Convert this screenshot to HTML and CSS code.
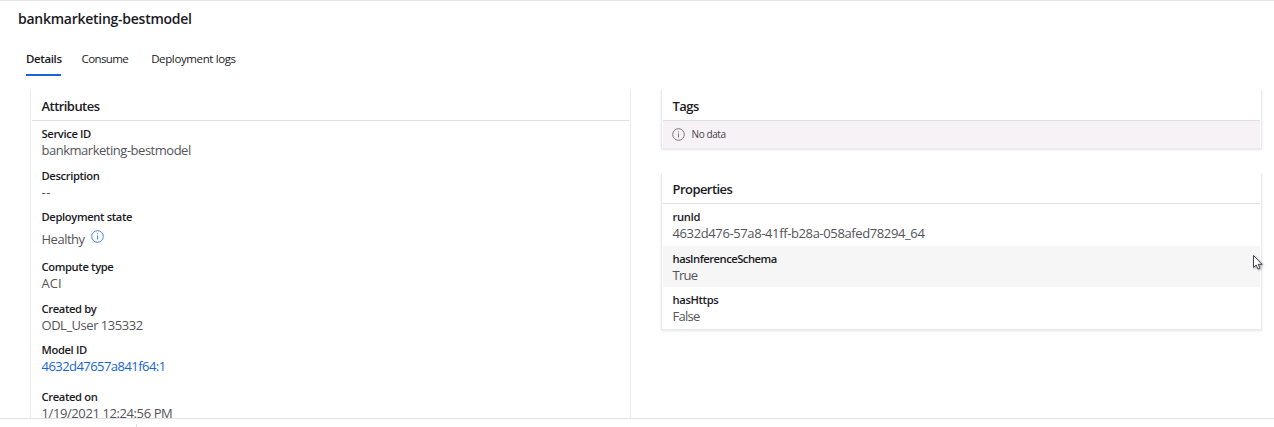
FILE: index.html
```html
<!DOCTYPE html>
<html lang="en">
<head>
<meta charset="utf-8">
<title>bankmarketing-bestmodel</title>
<link rel="stylesheet" href="styles.css">
</head>
<body>
<div class="page">
  <h1 class="title">bankmarketing-bestmodel</h1>
  <nav class="tabs">
    <a class="tab active">Details</a>
    <a class="tab consume">Consume</a>
    <a class="tab">Deployment logs</a>
  </nav>
  <main class="content">
    <section class="card attributes">
      <h2 class="heading">Attributes</h2>
      <dl class="list">
        <div class="row"><dt>Service ID</dt><dd>bankmarketing-bestmodel</dd></div>
        <div class="row"><dt>Description</dt><dd class="dashes">--</dd></div>
        <div class="row state"><dt>Deployment state</dt><dd>Healthy<svg class="info" viewBox="0 0 13 13"><circle cx="6.5" cy="6.5" r="5.8"/><path d="M6.5 5.5v4M6.5 3.3v1"/></svg></dd></div>
        <div class="row"><dt>Compute type</dt><dd class="aci">ACI</dd></div>
        <div class="row"><dt>Created by</dt><dd>ODL_User 135332</dd></div>
        <div class="row model"><dt>Model ID</dt><dd><a class="link">4632d47657a841f64:1</a></dd></div>
        <div class="row"><dt>Created on</dt><dd class="date">1/19/2021 12:24:56 PM</dd></div>
      </dl>
    </section>
    <div class="side">
      <section class="card raised">
        <h2 class="heading">Tags</h2>
        <div class="empty"><svg class="info" viewBox="0 0 13 13"><circle cx="6.5" cy="6.5" r="5.8"/><path d="M6.5 5.5v4M6.5 3.3v1"/></svg>No data</div>
      </section>
      <section class="card raised properties">
        <h2 class="heading">Properties</h2>
        <dl class="list">
          <div class="row"><dt>runId</dt><dd class="run">4632d476-57a8-41ff-b28a-058afed78294_64</dd></div>
          <div class="row hovered"><dt class="schema">hasInferenceSchema</dt><dd class="flag">True</dd></div>
          <div class="row"><dt>hasHttps</dt><dd class="flag">False</dd></div>
        </dl>
      </section>
    </div>
  </main>
  <footer class="footer"><i class="tick"></i></footer>
  <svg class="cursor" viewBox="0 0 12 17"><path d="M1.5 1.5v12l2.7-2.4 1.8 4 2-.9-1.8-3.9h3.9z"/></svg>
</div>
</body>
</html>
```

FILE: styles.css
```css
* { box-sizing: border-box; }
body { margin: 0; background: #fff; color: #1b1a1f; font-family: "Open Sans", "Noto Sans", sans-serif; }
h1, h2, dl, dd { margin: 0; }
.page { position: relative; display: flex; flex-direction: column; width: 1274px; height: 427px; overflow: hidden; border-top: 1px solid #e3e3e3; }
.title { height: 43px; padding: 8px 18px 0; font-size: 14px; line-height: 20px; font-weight: 600; letter-spacing: -.26px; }
.tabs { display: flex; height: 46px; padding-left: 26px; font-size: 11.5px; line-height: 29px; letter-spacing: -.38px; }
.tab { height: 32px; margin-right: 23px; }
.tab.active { width: 35px; margin-right: 20.5px; font-weight: 600; border-bottom: 2px solid #1664d9; }
.tab.consume { letter-spacing: -.6px; }
.content { display: flex; gap: 30px; height: 328px; padding-left: 30px; overflow: hidden; }
.card { width: 601px; padding: 0 1px; border: 1px solid #ece9ed; border-top: 0; }
.raised { height: 59px; box-shadow: 0 1px 2px #e8e4e8; }
.attributes { height: 340px; }
.heading { height: 31px; padding-left: 9.5px; border-bottom: 1px solid #dfdfdf; font-size: 13px; line-height: 32px; font-weight: 600; letter-spacing: -.55px; }
.row { height: 41.5px; padding: 4px 0 0 9.5px; }
dt { font-size: 11.2px; line-height: 17px; font-weight: 600; letter-spacing: -.36px; }
dt.schema { letter-spacing: -.48px; }
dd { font-size: 13px; line-height: 16px; color: #55545a; letter-spacing: -.48px; }
.dashes { letter-spacing: .5px; }
.aci { letter-spacing: 0; }
.date { letter-spacing: -.4px; }
.run { letter-spacing: -.38px; }
.flag { letter-spacing: -.75px; }
.state { height: 50px; }
.state dd { display: flex; gap: 6px; line-height: 28px; }
.info { width: 13px; height: 13px; fill: none; stroke: #77757b; stroke-width: 1; }
.state .info { stroke: #4c80e2; margin-top: 5px; }
.model { height: 47px; }
.link { color: #1664d9; letter-spacing: -.55px; }
.empty { display: flex; align-items: center; gap: 6.5px; height: 27px; padding: 0 0 1px 9px; background: #f6f2f6; font-size: 10px; letter-spacing: -.4px; color: #44434a; }
.properties { margin-top: 24px; height: 157px; }
.hovered { background: #f6f6f6; }
.footer { height: 9px; border-top: 1px solid #e3e1e6; }
.tick { display: block; width: 1px; height: 3px; margin: 5px 0 0 136px; background: #ddd; }
.cursor { position: absolute; left: 1252px; top: 253px; width: 12px; height: 17px; fill: #fff; stroke: #44424d; stroke-width: 1; filter: drop-shadow(1px 1px 1px #aaa); }
```
